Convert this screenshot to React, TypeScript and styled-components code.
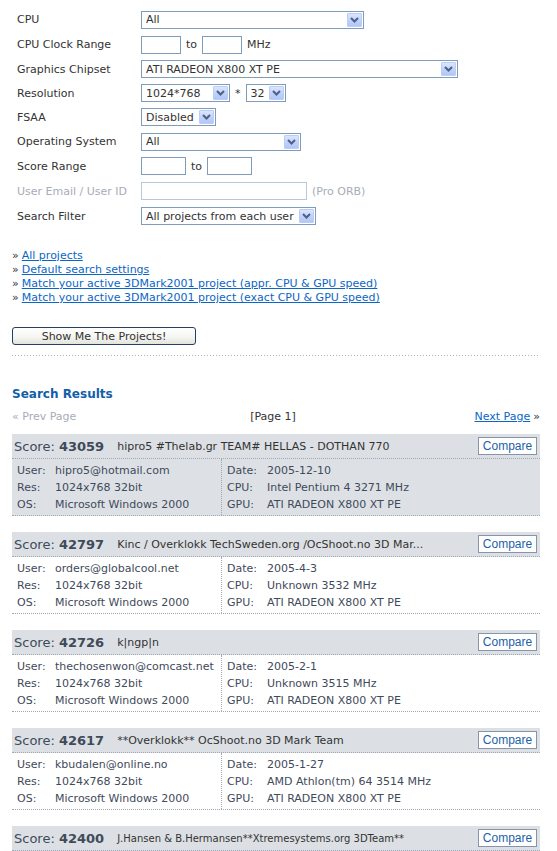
import React from "react";
import styled, { createGlobalStyle } from "styled-components";

const GlobalStyle = createGlobalStyle`
  html, body {
    margin: 0;
    padding: 0;
    background: #fff;
  }
  body {
    font-family: "DejaVu Sans", Verdana, sans-serif;
    font-size: 11px;
    color: #333;
  }
`;

type ResultRow = {
  score: number;
  name: string;
  nameSize?: number;
  user: string;
  res: string;
  os: string;
  date: string;
  cpu: string;
  gpu: string;
  highlight?: boolean;
};

const results: ResultRow[] = [
  {
    score: 43059,
    name: "hipro5 #Thelab.gr TEAM# HELLAS - DOTHAN 770",
    user: "hipro5@hotmail.com",
    res: "1024x768 32bit",
    os: "Microsoft Windows 2000",
    date: "2005-12-10",
    cpu: "Intel Pentium 4 3271 MHz",
    gpu: "ATI RADEON X800 XT PE",
    highlight: true,
  },
  {
    score: 42797,
    name: "Kinc / Overklokk TechSweden.org /OcShoot.no 3D Mar...",
    user: "orders@globalcool.net",
    res: "1024x768 32bit",
    os: "Microsoft Windows 2000",
    date: "2005-4-3",
    cpu: "Unknown 3532 MHz",
    gpu: "ATI RADEON X800 XT PE",
  },
  {
    score: 42726,
    name: "k|ngp|n",
    user: "thechosenwon@comcast.net",
    res: "1024x768 32bit",
    os: "Microsoft Windows 2000",
    date: "2005-2-1",
    cpu: "Unknown 3515 MHz",
    gpu: "ATI RADEON X800 XT PE",
  },
  {
    score: 42617,
    name: "**Overklokk** OcShoot.no 3D Mark Team",
    user: "kbudalen@online.no",
    res: "1024x768 32bit",
    os: "Microsoft Windows 2000",
    date: "2005-1-27",
    cpu: "AMD Athlon(tm) 64 3514 MHz",
    gpu: "ATI RADEON X800 XT PE",
  },
  {
    score: 42400,
    name: "J.Hansen & B.Hermansen**Xtremesystems.org 3DTeam**",
    nameSize: 10,
    user: "",
    res: "1024x768 32bit",
    os: "Microsoft Windows 2000",
    date: "",
    cpu: "",
    gpu: "ATI RADEON X800 XT PE",
  },
];

const Page = styled.div`
  padding: 7px 17px 0 12px;
`;

const Form = styled.div`
  display: grid;
  grid-template-columns: 124px 1fr;
  grid-template-rows: 25px 25px 24px 24px 24px 25px 24px 26px 24px;
  align-items: center;
  padding-left: 5px;
`;

const Label = styled.div<{ $disabled?: boolean }>`
  color: ${(p) => (p.$disabled ? "#a8acb8" : "#333")};
  white-space: nowrap;
`;

const Field = styled.div`
  display: flex;
  align-items: center;
  gap: 5px;
`;

const SelectBox = styled.div<{ $w: number }>`
  box-sizing: border-box;
  width: ${(p) => p.$w}px;
  height: 18px;
  border: 1px solid #7f9db9;
  background: #fff;
  display: flex;
  align-items: center;
  justify-content: space-between;
  padding: 0 1px 0 4px;
`;

const SelectText = styled.span`
  color: #333;
  white-space: nowrap;
  overflow: hidden;
`;

const ArrowBtn = styled.span`
  box-sizing: border-box;
  width: 15px;
  height: 14px;
  flex: none;
  border: 1px solid #b9cdf5;
  border-radius: 1px;
  background: linear-gradient(180deg, #dce6fd 0%, #c1d2fb 50%, #b3c6f6 100%);
  display: flex;
  align-items: center;
  justify-content: center;
`;

const TextBox = styled.div<{ $w: number; $disabled?: boolean }>`
  box-sizing: border-box;
  width: ${(p) => p.$w}px;
  height: 18px;
  border: 1px solid ${(p) => (p.$disabled ? "#b8c8d8" : "#7f9db9")};
  background: #fff;
`;

const Muted = styled.span`
  color: #a8acb8;
`;

const Select = ({ value, width }: { value: string; width: number }) => (
  <SelectBox $w={width}>
    <SelectText>{value}</SelectText>
    <ArrowBtn>
      <svg width="9" height="6" viewBox="0 0 9 6">
        <path d="M1 1 L4.5 4.5 L8 1" fill="none" stroke="#4d6185" strokeWidth="2" />
      </svg>
    </ArrowBtn>
  </SelectBox>
);

const LinkList = styled.ul`
  list-style: none;
  margin: 21px 0 0;
  padding: 0;
  line-height: 14px;
`;

const LinkItem = styled.li`
  display: flex;
  gap: 3px;
  color: #333;
`;

const Link = styled.a`
  color: #0b66c6;
  text-decoration: underline;
  cursor: pointer;
`;

const SubmitButton = styled.button`
  display: block;
  margin-top: 22px;
  box-sizing: border-box;
  width: 184px;
  height: 18px;
  padding: 0;
  border: 1px solid #233f63;
  border-radius: 3px;
  background: linear-gradient(180deg, #ffffff 0%, #f4f4f0 60%, #e4e3dc 100%);
  font-family: inherit;
  font-size: 11px;
  color: #333;
`;

const DotRule = styled.div`
  margin-top: 10px;
  height: 1px;
  background: repeating-linear-gradient(90deg, #b0b0b0 0 1px, transparent 1px 3px);
`;

const Heading = styled.h2`
  margin: 30px 0 0;
  font-size: 12px;
  line-height: 16px;
  font-weight: bold;
  color: #135eab;
`;

const Pager = styled.div`
  margin-top: 8px;
  display: grid;
  grid-template-columns: 1fr auto 1fr;
  line-height: 14px;
`;

const PrevPage = styled.span`
  color: #a8acb8;
`;

const PageNum = styled.span`
  color: #333;
  margin-left: -6px;
`;

const NextPage = styled.span`
  justify-self: end;
  display: flex;
  gap: 3px;
`;

const Card = styled.div`
  margin-top: 10px;
  & + & {
    margin-top: 16px;
  }
`;

const CardHeader = styled.div`
  height: 24px;
  background: #dce0e4;
  border-bottom: 1px dotted #a0a8b4;
  display: flex;
  align-items: center;
  padding: 0 3px 0 2px;
`;

const ScoreLabel = styled.span`
  font-size: 13px;
  color: #3f4a5a;
  white-space: nowrap;
`;

const ScoreValue = styled.b`
  font-size: 13px;
  color: #3f4a5a;
`;

const TeamName = styled.span<{ $size: number }>`
  margin-left: 13px;
  font-size: ${(p) => p.$size}px;
  color: #333;
  white-space: nowrap;
  flex: 1;
`;

const CompareButton = styled.button`
  box-sizing: border-box;
  width: 59px;
  height: 18px;
  padding: 0;
  border: 1px solid #8795a8;
  background: #fff;
  font-family: "Liberation Sans", Arial, sans-serif;
  font-size: 12px;
  color: #1d5fa8;
`;

const CardBody = styled.div<{ $highlight?: boolean }>`
  display: grid;
  grid-template-columns: 210px 1fr;
  background: ${(p) => (p.$highlight ? "#dde1e5" : "#fff")};
  border-bottom: 1px dotted #a0a8b4;
`;

const Column = styled.div<{ $divider?: boolean }>`
  padding: 3px 0 2px 5px;
  border-right: ${(p) => (p.$divider ? "1px dotted #a0a8b4" : "none")};
`;

const InfoRow = styled.div<{ $labelW: number }>`
  display: grid;
  grid-template-columns: ${(p) => p.$labelW}px 1fr;
  height: 17px;
  align-items: center;
  color: #3f4a5a;
  white-space: nowrap;
`;

const ResultCard = ({ r }: { r: ResultRow }) => (
  <Card>
    <CardHeader>
      <ScoreLabel>
        Score: <ScoreValue>{r.score}</ScoreValue>
      </ScoreLabel>
      <TeamName $size={r.nameSize ?? 11}>{r.name}</TeamName>
      <CompareButton>Compare</CompareButton>
    </CardHeader>
    <CardBody $highlight={r.highlight}>
      <Column $divider>
        <InfoRow $labelW={38}>
          <span>User:</span>
          <span>{r.user}</span>
        </InfoRow>
        <InfoRow $labelW={38}>
          <span>Res:</span>
          <span>{r.res}</span>
        </InfoRow>
        <InfoRow $labelW={38}>
          <span>OS:</span>
          <span>{r.os}</span>
        </InfoRow>
      </Column>
      <Column>
        <InfoRow $labelW={40}>
          <span>Date:</span>
          <span>{r.date}</span>
        </InfoRow>
        <InfoRow $labelW={40}>
          <span>CPU:</span>
          <span>{r.cpu}</span>
        </InfoRow>
        <InfoRow $labelW={40}>
          <span>GPU:</span>
          <span>{r.gpu}</span>
        </InfoRow>
      </Column>
    </CardBody>
  </Card>
);

export default function App() {
  return (
    <>
      <GlobalStyle />
      <Page>
        <Form>
          <Label>CPU</Label>
          <Field>
            <Select value="All" width={223} />
          </Field>

          <Label>CPU Clock Range</Label>
          <Field>
            <TextBox $w={40} />
            <span>to</span>
            <TextBox $w={40} />
            <span>MHz</span>
          </Field>

          <Label>Graphics Chipset</Label>
          <Field>
            <Select value="ATI RADEON X800 XT PE" width={317} />
          </Field>

          <Label>Resolution</Label>
          <Field>
            <Select value="1024*768" width={89} />
            <span>*</span>
            <Select value="32" width={40} />
          </Field>

          <Label>FSAA</Label>
          <Field>
            <Select value="Disabled" width={75} />
          </Field>

          <Label>Operating System</Label>
          <Field>
            <Select value="All" width={160} />
          </Field>

          <Label>Score Range</Label>
          <Field>
            <TextBox $w={45} />
            <span>to</span>
            <TextBox $w={45} />
          </Field>

          <Label $disabled>User Email / User ID</Label>
          <Field>
            <TextBox $w={166} $disabled />
            <Muted>(Pro ORB)</Muted>
          </Field>

          <Label>Search Filter</Label>
          <Field>
            <Select value="All projects from each user" width={175} />
          </Field>
        </Form>

        <LinkList>
          <LinkItem>
            »<Link>All projects</Link>
          </LinkItem>
          <LinkItem>
            »<Link>Default search settings</Link>
          </LinkItem>
          <LinkItem>
            »<Link>Match your active 3DMark2001 project (appr. CPU &amp; GPU speed)</Link>
          </LinkItem>
          <LinkItem>
            »<Link>Match your active 3DMark2001 project (exact CPU &amp; GPU speed)</Link>
          </LinkItem>
        </LinkList>

        <SubmitButton>Show Me The Projects!</SubmitButton>
        <DotRule />

        <Heading>Search Results</Heading>
        <Pager>
          <PrevPage>« Prev Page</PrevPage>
          <PageNum>[Page 1]</PageNum>
          <NextPage>
            <Link>Next Page</Link>»
          </NextPage>
        </Pager>

        {results.map((r) => (
          <ResultCard key={r.score} r={r} />
        ))}
      </Page>
    </>
  );
}
